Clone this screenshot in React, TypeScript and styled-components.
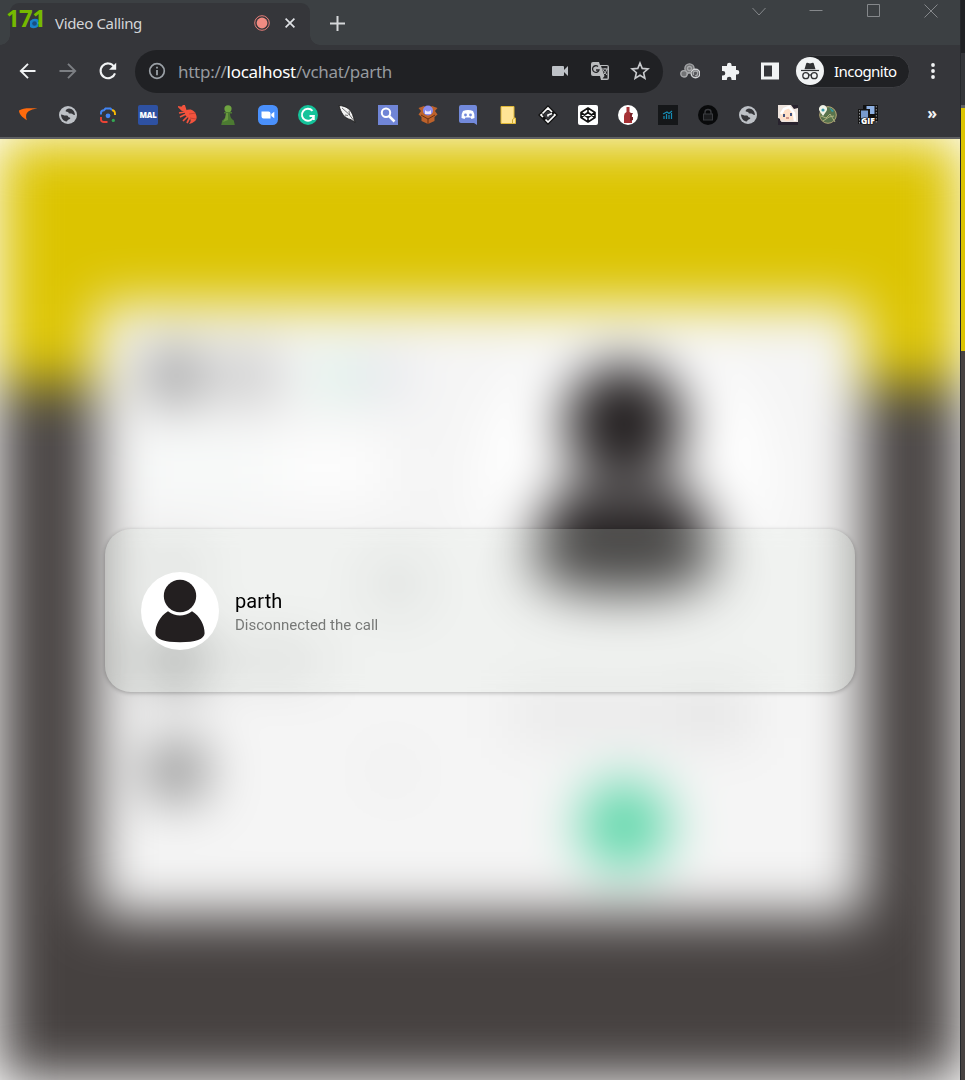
import React from 'react';
import styled, { createGlobalStyle } from 'styled-components';

const Global = createGlobalStyle`
  * { box-sizing: border-box; }
  body { margin: 0; background: #3b3736; overflow: hidden; }
`;
const ui = `"Noto Sans", "Open Sans", sans-serif`;

const Desktop = styled.div`display: flex; width: 965px; height: 1080px; overflow: hidden;`;
const Window = styled.div`width: 960px; height: 1080px; display: flex; flex-direction: column; background: #fff; flex: none;`;
const Behind = styled.div`width: 5px; display: flex; flex-direction: column; border-left: 1px solid #25282c;`;
const Strip = styled.div<{ $h: number; $c: string }>`height: ${p => p.$h}px; background: ${p => p.$c}; flex: none;`;

const TabBar = styled.header`height: 45px; background: #3c4043; display: flex; align-items: flex-end; padding-left: 10px; position: relative;`;
const Tab = styled.div`
  width: 300px; height: 42px; background: #35363a; border-radius: 9px 9px 0 0; position: relative;
  display: flex; align-items: center; padding: 0 15px 2px 19px; font-family: ${ui};
  &::before, &::after { content: ''; position: absolute; bottom: 0; width: 10px; height: 10px; }
  &::before { left: -10px; background: radial-gradient(circle at 0 0, transparent 9.5px, #35363a 10px); }
  &::after { right: -10px; background: radial-gradient(circle at 100% 0, transparent 9.5px, #35363a 10px); }
`;
const Favicon = styled.svg`width: 12px; height: 12px; margin-right: 14px; flex: none;`;
const TabTitle = styled.span`color: #d3d5d8; font-size: 15px; line-height: 20px; letter-spacing: -0.35px; flex: 1; white-space: nowrap;`;
const Fps = styled.span`
  position: absolute; left: 6px; top: 4px; color: #76b900; white-space: nowrap;
  font: bold 24px/28px "Open Sans", sans-serif; letter-spacing: -0.6px;
`;
const Glyph = styled.svg<{ $w?: number }>`width: ${p => p.$w ?? 20}px; height: ${p => p.$w ?? 20}px; flex: none; display: block;`;
const NewTab = styled.div`width: 54px; height: 42px; display: flex; align-items: center; justify-content: center; padding-bottom: 2px;`;
const Controls = styled.div`margin-left: auto; width: 230px; height: 100%; padding: 1px 19px 0 19px; display: flex; justify-content: space-between; align-items: flex-start;`;

const Toolbar = styled.div`height: 52px; background: #35363a; display: flex; align-items: center; padding: 0 17px 0 18px;`;
const Nav = styled.div`display: flex; gap: 20px; width: 117px;`;
const Address = styled.div`
  width: 528px; height: 43px; border-radius: 22px; background: #202124; display: flex; align-items: center;
  padding: 0 13px 0 12px; font: 17px/24px ${ui}; color: #969a9f; letter-spacing: -0.27px;
`;
const Url = styled.span`margin-left: 11px; flex: 1; white-space: nowrap; padding-top: 1px; b { font-weight: 400; color: #fff; }`;
const AddressIcons = styled.div`display: flex; gap: 20px;`;
const Extensions = styled.div`display: flex; gap: 20px; margin-left: 17px; width: 115px;`;
const Incognito = styled.div`
  width: 115px; height: 33px; border-radius: 17px; background: #202124; border: 1px solid #3d3e42;
  display: flex; align-items: center; gap: 10px; color: #fff; font: 15px/20px ${ui}; letter-spacing: -0.55px;
`;
const Bookmarks = styled.div`height: 42px; background: #35363a; border-bottom: 2px solid #5f6062; display: flex; align-items: center; gap: 20px; padding: 0 19px 4px 18px;`;
const More = styled.span`margin-left: auto; color: #f1f3f4; font: bold 16px/20px ${ui}; padding-right: 4px; transform: translateY(-2px);`;

const Viewport = styled.main`height: 941px; position: relative; overflow: hidden; background: #fff;`;
const Scene = styled.div`
  height: 941px; filter: blur(27px); padding: 165px 96px;
  background: linear-gradient(#dcc400 0 245px, #464140 245px);
`;
const ChatCard = styled.div`height: 611px; background: #f5f5f5; display: flex;`;
const Contacts = styled.div`width: 288px; padding: 45px 0 0 50px;`;
const Top = styled.div`display: flex; align-items: center; height: 54px; margin-bottom: 40px;`;
const Dot = styled.div<{ $s: number; $c: string; $ml?: number }>`width: ${p => p.$s}px; height: ${p => p.$s}px; border-radius: 50%; background: ${p => p.$c}; margin-left: ${p => p.$ml ?? 0}px; flex: none;`;
const Search = styled.div`height: 50px; width: 245px; background: linear-gradient(90deg, #f8fbfa 50%, #fff 60%); margin: 0 0 34px -8px;`;
const Contact = styled.div<{ $h: number }>`height: ${p => p.$h}px; display: flex; align-items: center;`;
const NameBar = styled.div`height: 22px; width: 98px; background: #cecece; margin-left: 20px;`;
const Profile = styled.div`flex: 1; display: flex; flex-direction: column; align-items: center; padding: 30px 0 0 0;`;
const BigPicture = styled.div`width: 290px; height: 290px; border-radius: 50%; background: #fff; margin-right: 1px; svg { display: block; }`;
const Caption = styled.div`width: 236px; height: 52px; background: linear-gradient(90deg, #e9e9e9 60%, #e0e0e0); margin: 64px 0 41px 10px;`;

const Modal = styled.section`
  position: absolute; left: 105px; top: 390px; width: 750px; height: 163px; border-radius: 26px;
  background: rgba(222, 229, 218, .2); box-shadow: 0 1px 4px rgba(0,0,0,.27); backdrop-filter: blur(8px);
  display: flex; align-items: center; padding-left: 36px;
`;
const Photo = styled.div`width: 78px; height: 78px; border-radius: 50%; background: #fff; overflow: hidden; svg { display: block; }`;
const Person = styled.div`margin-left: 16px; padding-top: 4px; font-family: Roboto, sans-serif;`;
const Name = styled.div`font-size: 20px; line-height: 26px; color: #000; letter-spacing: .1px; margin-top: -1px;`;
const Status = styled.div`font-size: 15px; line-height: 23px; color: #777977;`;

const Avatar = ({ size }: { size: number }) => (
  <svg width={size} height={size} viewBox="0 0 78 78" fill="#231f20">
    <circle cx="39" cy="24" r="16.2" />
    <path d="M27 39.2C19 44 14.4 53 14.4 61.2C14.4 67 23.5 70.2 39 70.2S63.6 67 63.6 61.2C63.6 53 59 44 51 39.2Q39 48 27 39.2Z" />
  </svg>
);

const Globe = () => (
  <Glyph viewBox="0 0 20 20"><circle cx="10" cy="10" r="9" fill="#bdc1c6" />
    <path d="M3 9.5c2 .2 3 1.4 5.5 1 2-.2 1.2 2 3 2 1.3 0 1 1.8-.8 2-1.6.2-1 2-2.2 2C5.5 16.200 3 13.200 3 9.500ZM8.500 4.500c2-1.800 5-.8 6.500.7 1.200 1.200 2 3 1.900 4.800-2.200.2-2-1.700-4-1.600-1.600.1-2.300.4-2.300-.8 0-1-2.900-.5-2.900-1.700 0-.7.3-1 .8-1.400Z" fill="#35363a" /></Glyph>
);

const bookmarks = [
  <Glyph key="swoosh" viewBox="0 0 20 20"><path d="M1 5.500C5 2.800 11 3 19.500 3.500 12 4.800 6 6.300 8.800 15.300 4 12 1 9 1 5.500Z" fill="#ff6a0c" /></Glyph>,
  <Globe key="globe" />,
  <Glyph key="lens" viewBox="0 0 20 20" fill="none" strokeWidth="1.900"><path d="M3 9.500V8Q3 5.200 6 5.200L7.500 3.500h5L14 5.200" stroke="#4285f4" /><path d="M14 5.200q3 0 3 3.800v1" stroke="#fbbc04" /><path d="M3 12v2.500Q3 17 6 17h3.500" stroke="#ea4335" /><circle cx="10" cy="10.800" r="2.400" fill="#4285f4" /><circle cx="15.300" cy="15.400" r="1.600" fill="#34a853" /></Glyph>,
  <Glyph key="mal" viewBox="0 0 20 20"><rect width="20" height="20" rx="2" fill="#2e51a2" /><text x="1.500" y="13.200" fontFamily="Open Sans" fontWeight="800" fontSize="7.800" letterSpacing="-.25" fill="#fff">MAL</text></Glyph>,
  <Glyph key="shrimp" viewBox="0 0 20 20" fill="#f4533d"><path d="M7 6c5-3 10-1 11.500 5 .8 4-2 6.500-7.500 8 2-2.500 2-4 1-5L7 10Z" /><path d="M1 2l3 .5L6 0l2 6-4-1ZM7 7L1 8M8 9l-6 3M10 11l-5 5M12 12l-3 6" stroke="#f4533d" strokeWidth="1.700" /><path d="M11 9l7-1M12 13l6 1" stroke="#b43a31" strokeWidth=".7" /></Glyph>,
  <Glyph key="pawn" viewBox="0 0 20 20"><circle cx="10" cy="3.800" r="3.600" fill="#6ea440" /><path d="M6 7h8v1.500h-2q0 5 3.800 7l1 4.500H3.200l1-4.500Q8 13.500 8 8.500H6Z" fill="#4c7a32" /><path d="M8 8h2v7l-5 2Q8 13 8 8Z" fill="#69983f" /></Glyph>,
  <Glyph key="zoom" viewBox="0 0 20 20"><rect width="20" height="20" rx="5.500" fill="#4a90fb" /><path d="M3.500 6.500h7q2 0 2 2v5h-7q-2 0-2-2Zm9.800 2.500 3-2.200v6.500l-3-2.200Z" fill="#fff" /></Glyph>,
  <Glyph key="grammar" viewBox="0 0 20 20"><circle cx="10" cy="10" r="10" fill="#15c39a" /><path d="M14.500 5.800A6 6 0 1 0 15.800 11H11.500M15.800 11v4" stroke="#fff" strokeWidth="1.900" fill="none" /></Glyph>,
  <Glyph key="feather" viewBox="0 0 20 20"><path d="M1 .5c7 .5 12.500 3.500 14.500 12l1.500 5-4-2.800C6 13 3 8 1 .5Z" fill="#f2f2f2" stroke="#151515" strokeWidth=".8" /><path d="M4 3Q11 8 17 17M11 6l.5 4M7 10l3 .5" stroke="#383838" strokeWidth=".7" fill="none" /></Glyph>,
  <Glyph key="search" viewBox="0 0 20 20"><path d="M0 0h20v20H0Z" fill="#7085d6" /><circle cx="8" cy="7.800" r="4.200" stroke="#fff" strokeWidth="2" fill="none" /><path d="m11 11 5.500 5.500" stroke="#fff" strokeWidth="2.500" /></Glyph>,
  <Glyph key="box" viewBox="0 0 20 20"><path d="m3 6-2.500-3L6 1l4 3 4-3 5.500 2L17 6l2.500 3.500L16.500 12v4L10 19l-6.500-3v-4L.5 9.500Z" fill="#bd622b" /><path d="m3 10 7 4 7-4M10 14v5" stroke="#693013" fill="none" /><circle cx="10" cy="5.500" r="5" fill="#8a8eef" /><path d="M7 5q3 3 6 0v4H7Z" fill="#eee9ff" /></Glyph>,
  <Glyph key="discord" viewBox="0 0 20 20"><path d="M3 0h14q2 0 2 2v18l-3-2H3q-2 0-2-2V2q0-2 2-2Z" fill="#7289da" /><path d="M5 6q5-2 10 0 2 3 1.500 7l-3 1-1-1.500h-5l-1 1.500-3-1Q3 9 5 6Z" fill="#fff" /><circle cx="7.500" cy="10" r="1.400" fill="#7289da" /><circle cx="12.500" cy="10" r="1.400" fill="#7289da" /></Glyph>,
  <Glyph key="note" viewBox="0 0 20 20"><path d="M3 1.500h13V13h1.500v5.500H3Z" fill="#ffe495" stroke="#dfb736" /><path d="M14.500 18v-3.500l2-1.500" fill="none" stroke="#cca82d" /></Glyph>,
  <Glyph key="diamond" viewBox="0 0 20 20"><path d="m10 2.500 7.500 7.500-7.500 7.500L2.500 10Z" fill="#35363a" stroke="#111" strokeWidth="3.500" /><path d="m4.500 8.500 5.500-5.500 4 4M16 9l1 1-7 7-2.500-2.500M5 12l-2-2 1-1M10 11.500V10l4-1.500" stroke="#fff" strokeWidth="1.700" fill="none" /></Glyph>,
  <Glyph key="codepen" viewBox="0 0 20 20"><rect width="20" height="20" rx="2" fill="#fff" /><path d="m10 3 7 4.500v5L10 17l-7-4.500v-5Zm0 0v4.500m0 5V17M3 7.500l7 5 7-5M3 12.500l7-5 7 5" stroke="#111" strokeWidth="1.600" strokeLinejoin="round" fill="none" /></Glyph>,
  <Glyph key="bottle" viewBox="0 0 20 20"><circle cx="10" cy="10" r="10" fill="#fff" /><path d="M8.500 2h3v5q3 1 2.500 5v6H6v-7q0-3 2.500-4Z" fill="#a63236" /><path d="M12 8h3l-2 4h2v3l-3 1Z" fill="#752328" /></Glyph>,
  <Glyph key="bars" viewBox="0 0 20 20"><path d="M0 0h20v20H0Z" fill="#151719" /><path d="M6 14v-3m2.500 3V9m2.500 5v-4m2.500 4V8M5 9l4-2 2 1.500L14 6" stroke="#168eb6" strokeWidth="1.200" fill="none" /></Glyph>,
  <Glyph key="lock" viewBox="0 0 20 20"><circle cx="10" cy="10" r="10" fill="#090a0b" /><rect x="5.500" y="9" width="9" height="6" fill="#1b1c1e" stroke="#3b3c40" /><path d="M7 9V7q0-2.500 3-2.500T13 7v2" stroke="#3b3c40" strokeWidth="1.300" fill="none" /></Glyph>,
  <Globe key="globe2" />,
  <Glyph key="anime" viewBox="0 0 20 20"><path d="M0 0h20v20H0Z" fill="#eee4dd" /><path d="M0 13q3 0 4 7H0ZM13 0l3 4 4-1V0ZM3 17h17v3H3Z" fill="#28232e" /><path d="M3 7q7-8 13 1l1 9-3-3q-5 4-9 0l-3 2Z" fill="#ffe0c8" /><path d="M3 9 6 4l5-2 5 6 1 8" stroke="#fff" strokeWidth="2.500" fill="none" /><path d="M5 9h2v3H5Zm7-1h2v3h-2Z" fill="#42537d" /><path d="M8 13h3" stroke="#a95454" /></Glyph>,
  <Glyph key="map" viewBox="0 0 20 20"><circle cx="10" cy="10" r="8.300" fill="#58734d" stroke="#b6aa75" /><path d="m3 11 5 2 4-4 5 8M5 16l6-4 5-1" stroke="#b0b581" fill="none" /><path d="M5 11 1.500 6a4 4 0 1 1 7 0Z" fill="#f1f4e8" /><circle cx="5" cy="5" r="1.600" fill="#3b9baa" /><path d="m11 2 5 4-2 1Z" fill="#309ca9" /></Glyph>,
  <Glyph key="gif" viewBox="0 0 20 20"><path d="M5 0h15v16H5Z" fill="#111" /><path d="M8.500 1h8v8h-8Z" fill="#8eb1e3" /><path d="M0 4h12v15H0Z" fill="#161616" /><path d="M3 5.500h7v8H3Z" fill="#779acd" /><path d="M18.300 1v17M1.500 5v14" stroke="#8c8e91" strokeDasharray="1.500 1.500" /><text x="3" y="18.500" fontFamily="Open Sans" fontSize="8.500" fontWeight="800" fill="#fff" stroke="#111" strokeWidth="1.200" paintOrder="stroke">GIF</text></Glyph>,
];

export default function App() {
  return (
    <Desktop>
      <Global />
      <Window>
        <TabBar>
          <Tab>
            <Favicon viewBox="0 0 12 12"><path d="M1 4q4-4 9-1v6q-5 4-9 1Z" fill="#1881c9" /><circle cx="5.500" cy="6.500" r="2.300" fill="#174d82" /><path d="m8 6 4-3v6Z" fill="#42a8e2" /></Favicon>
            <TabTitle>Video Calling</TabTitle>
            <Glyph $w={16} viewBox="0 0 16 16"><circle cx="8" cy="8" r="7.300" fill="none" stroke="#e57c77" /><circle cx="8" cy="8" r="5.400" fill="#f28b82" /></Glyph>
            <Glyph $w={10} style={{ marginLeft: 15 }} viewBox="0 0 10 10"><path d="m.6.6 8.800 8.800m0-8.800L.6 9.400" stroke="#dfe1e5" strokeWidth="1.700" /></Glyph>
          </Tab>
          <NewTab><Glyph $w={15} viewBox="0 0 15 15"><path d="M7.500 0v15M0 7.500h15" stroke="#d5d7da" strokeWidth="2" /></Glyph></NewTab>
          <Controls>
            {['m3.500 7 6.500 7 6.500-7', 'M3.500 9.500h13', 'M3.500 3.500h12v12h-12Z', 'm3.500 3.500 13 13m0-13-13 13'].map(d => (
              <Glyph key={d} viewBox="0 0 20 20"><path d={d} stroke="#85888b" fill="none" /></Glyph>
            ))}
          </Controls>
          <Fps>171</Fps>
        </TabBar>
        <Toolbar>
          <Nav>
            <Glyph viewBox="0 0 20 20"><path d="M17.500 10H3m7-7.200L2.800 10l7.200 7.200" stroke="#f1f3f4" strokeWidth="1.900" fill="none" /></Glyph>
            <Glyph viewBox="0 0 20 20"><path d="M1.500 10H17m-7-7.200 7.200 7.200-7.200 7.200" stroke="#7c7f83" strokeWidth="1.900" fill="none" /></Glyph>
            <Glyph viewBox="0 0 20 20"><path d="M16.100 5.600A7.400 7.400 0 1 0 17 12.300" stroke="#f1f3f4" strokeWidth="2.100" fill="none" /><path d="M18.200 1.800v7H11Z" fill="#f1f3f4" /></Glyph>
          </Nav>
          <Address>
            <Glyph viewBox="0 0 20 20"><circle cx="10" cy="10" r="7.300" fill="none" stroke="#9aa0a6" strokeWidth="1.700" /><path d="M10 9v5.200M10 5.700v1.800" stroke="#9aa0a6" strokeWidth="1.800" /></Glyph>
            <Url>http://<b>localhost</b>/vchat/parth</Url>
            <AddressIcons>
              <Glyph viewBox="0 0 20 20"><path d="M2 6q0-1 1-1h10q1 0 1 1v3l4-4v10l-4-4v3q0 1-1 1H3q-1 0-1-1Z" fill="#bdc1c6" /></Glyph>
              <Glyph viewBox="0 0 20 20"><path d="M3 1h6l1 3h7q2 0 2 2v11q0 2-2 2h-6l-1-4H3q-2 0-2-2V3q0-2 2-2Z" fill="#b9bbbd" /><path d="M11 5h6.500v12.500h-5l2-2.500-3.500-10Z" fill="#242528" /><path d="M8 5.500A3.300 3.300 0 1 0 9 9H6" stroke="#242528" strokeWidth="1.300" fill="none" /><path d="M12 8h6m-3-1v1m2 0q-1 4-4 6m0-5 4 5" stroke="#b9bbbd" fill="none" /></Glyph>
              <Glyph viewBox="0 0 20 20"><path d="m10 2 2.200 5.400 5.800.5-4.400 3.800 1.300 5.700-4.900-3.100-4.900 3.100 1.300-5.700L2 7.900l5.800-.5Z" stroke="#c8cacd" strokeWidth="1.600" fill="none" /></Glyph>
            </AddressIcons>
          </Address>
          <Extensions>
            <Glyph viewBox="0 0 20 20" stroke="#a7a8aa" fill="#737476" strokeWidth="1.400"><circle cx="9.500" cy="7.500" r="4.600" /><circle cx="4" cy="12.800" r="3.200" /><circle cx="15.500" cy="12.500" r="4.300" fill="#55565a" stroke="#d3d4d6" /><circle cx="9.500" cy="7.500" r="2" /><path d="M7 14q1-4 5-2M13.500 14q-1-4 2-4t2 3-2 1" fill="none" /></Glyph>
            <Glyph viewBox="0 0 20 20"><path d="M3 5h4V4a2.300 2.300 0 0 1 4.600 0v1H16v4h1a2.300 2.300 0 0 1 0 4.600h-1V19h-4.500v-1a2.300 2.300 0 0 0-4.600 0v1H2v-4.500h1a2.300 2.300 0 0 0 0-4.600H2V5Z" fill="#f1f3f4" /></Glyph>
            <Glyph viewBox="0 0 20 20"><path d="M1 1.500h18v17H1ZM4 4.500v11h8v-11Z" fill="#f1f3f4" fillRule="evenodd" /></Glyph>
          </Extensions>
          <Incognito>
            <Glyph $w={28} viewBox="0 0 28 28"><circle cx="14" cy="14" r="14" fill="#f1f3f4" /><path d="m8.500 12.200 1.800-6q.3-.7 1-.4l2.700.8 2.700-.8q.7-.3 1 .4l1.800 6Z" fill="#303134" /><path d="M5 13.500h18" stroke="#303134" strokeWidth="1.200" /><g fill="none" stroke="#303134" strokeWidth="1.300"><circle cx="9.800" cy="18.700" r="3" /><circle cx="18.200" cy="18.700" r="3" /><path d="M12.800 18.300q1.200-.7 2.400 0" /></g></Glyph>
            Incognito
          </Incognito>
          <Glyph style={{ marginLeft: 13 }} viewBox="0 0 20 20" fill="#f1f3f4"><circle cx="10" cy="4" r="1.900" /><circle cx="10" cy="10" r="1.900" /><circle cx="10" cy="16" r="1.900" /></Glyph>
        </Toolbar>
        <Bookmarks>{bookmarks}<More>»</More></Bookmarks>
        <Viewport>
          <Scene>
            <ChatCard>
              <Contacts>
                <Top><Dot $s={56} $c="#888888" /><Dot $s={60} $c="#c4c4c4" $ml={16} /><Dot $s={36} $c="#c4efdd" $ml={42} /><Dot $s={32} $c="#cbd0dd" $ml={14} /></Top>
                <Search />
                <Contact $h={80}><Dot $s={44} $c="#d2d2d2" $ml={6} /><Dot $s={46} $c="#d6d7d7" $ml={178} style={{ marginTop: 34 }} /></Contact>
                <Contact $h={108}><Dot $s={56} $c="#848484" /><NameBar /></Contact>
                <Contact $h={112}><Dot $s={60} $c="#7c7c7c" /><Dot $s={34} $c="#e8e8e8" $ml={170} /></Contact>
              </Contacts>
              <Profile>
                <BigPicture><Avatar size={290} /></BigPicture>
                <Caption />
                <Dot $s={89} $c="#58d6a7" />
              </Profile>
            </ChatCard>
          </Scene>
          <Modal>
            <Photo><Avatar size={78} /></Photo>
            <Person><Name>parth</Name><Status>Disconnected the call</Status></Person>
          </Modal>
        </Viewport>
      </Window>
      <Behind><Strip $h={53} $c="#202124" /><Strip $h={52} $c="#35363a" /><Strip $h={3} $c="#5f6062" /><Strip $h={243} $c="#dcc400" /><Strip $h={729} $c="#474241" /></Behind>
    </Desktop>
  );
}
